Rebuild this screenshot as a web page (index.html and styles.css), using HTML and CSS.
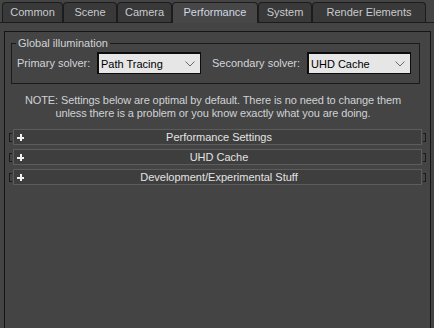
FILE: index.html
```html
<!DOCTYPE html>
<html>
<head>
<meta charset="utf-8">
<link rel="stylesheet" href="styles.css">
</head>
<body>
<div class="tabs">
  <div class="tab tab-common">Common</div>
  <div class="tab tab-scene">Scene</div>
  <div class="tab tab-camera">Camera</div>
  <div class="tab tab-performance active">Performance</div>
  <div class="tab tab-system">System</div>
  <div class="tab tab-render">Render Elements</div>
</div>
<div class="page">
  <div class="rollout">
    <fieldset class="group">
      <legend>Global illumination</legend>
      <div class="solver-row">
        <span class="label label-primary">Primary solver:</span>
        <div class="select"><span>Path Tracing</span><svg class="chev" width="10" height="6" viewBox="0 0 10 6"><polyline points="0.5,0.5 5,5 9.5,0.5" fill="none" stroke="#6a6a6a" stroke-width="1"/></svg></div>
        <span class="label label-secondary">Secondary solver:</span>
        <div class="select"><span>UHD Cache</span><svg class="chev" width="10" height="6" viewBox="0 0 10 6"><polyline points="0.5,0.5 5,5 9.5,0.5" fill="none" stroke="#6a6a6a" stroke-width="1"/></svg></div>
      </div>
    </fieldset>
    <p class="note">NOTE: Settings below are optimal by default. There is no need to change them<br>unless there is a problem or you know exactly what you are doing.</p>
    <div class="rollups">
      <div class="rollup-row">
        <span class="bracket bracket-left"></span>
        <div class="bar"><svg class="plus" width="7" height="7" viewBox="0 0 7 7"><rect x="0" y="3" width="7" height="2" fill="#f2f2f2"/><rect x="3" y="0" width="2" height="7" fill="#f2f2f2"/></svg><span class="bar-title">Performance Settings</span></div>
        <span class="bracket bracket-right"></span>
      </div>
      <div class="rollup-row">
        <span class="bracket bracket-left"></span>
        <div class="bar"><svg class="plus" width="7" height="7" viewBox="0 0 7 7"><rect x="0" y="3" width="7" height="2" fill="#f2f2f2"/><rect x="3" y="0" width="2" height="7" fill="#f2f2f2"/></svg><span class="bar-title">UHD Cache</span></div>
        <span class="bracket bracket-right"></span>
      </div>
      <div class="rollup-row">
        <span class="bracket bracket-left"></span>
        <div class="bar"><svg class="plus" width="7" height="7" viewBox="0 0 7 7"><rect x="0" y="3" width="7" height="2" fill="#f2f2f2"/><rect x="3" y="0" width="2" height="7" fill="#f2f2f2"/></svg><span class="bar-title">Development/Experimental Stuff</span></div>
        <span class="bracket bracket-right"></span>
      </div>
    </div>
  </div>
</div>
</body>
</html>
```

FILE: styles.css
```css
html, body {
  margin: 0;
  padding: 0;
  background: #444444;
  height: 100%;
  overflow: hidden;
}
body {
  font-family: "Liberation Sans", Arial, sans-serif;
  font-size: 11px;
  color: #d2d4d8;
}
.tabs {
  display: flex;
  align-items: flex-end;
  height: 20px;
  padding: 2px 0 0 2px;
  border-bottom: 1px solid #1c1c1c;
}
.tab {
  box-sizing: border-box;
  height: 20px;
  border: 1px solid #1c1c1c;
  border-bottom: none;
  border-radius: 4px 4px 0 0;
  background: #393939;
  color: #c8cacd;
  display: flex;
  align-items: center;
  justify-content: center;
  padding-bottom: 1px;
}
.tab-common { width: 61px; }
.tab-scene { width: 54px; }
.tab-camera { width: 55px; }
.tab-performance { width: 86px; }
.tab-system { width: 54px; }
.tab-render { width: 114px; }
.tab.active {
  height: 21px;
  margin-bottom: -1px;
  background: #474747;
  color: #d0d8e6;
  padding-bottom: 2px;
}
.page {
  padding: 8px 3px 0 4px;
}
.rollout {
  box-sizing: border-box;
  height: calc(100vh - 31px);
  border: 1px solid #151515;
  border-bottom: none;
  padding: 0 0 0 6px;
}
.group {
  box-sizing: border-box;
  width: 409px;
  margin: 5px 0 0 0;
  padding: 2px 5px 9px 5px;
  border: 1px solid #1a1a1a;
}
.group legend {
  padding: 0 2px;
  margin-left: -1px;
  line-height: 13px;
  color: #d2d4d8;
}
.solver-row {
  display: flex;
  align-items: center;
  height: 22px;
}
.label {
  white-space: nowrap;
}
.label-primary { width: 80px; }
.label-secondary { width: 95px; margin-left: 11px; }
.select {
  box-sizing: border-box;
  width: 104px;
  height: 22px;
  border: 2px solid #0c0c0c;
  border-right-width: 1px;
  border-bottom-width: 1px;
  background: #e6e6e6;
  color: #000;
  display: flex;
  align-items: center;
  justify-content: space-between;
  padding: 0 5px 0 2px;
}
.chev { display: block; }
.note {
  margin: 10px 15px 0 0;
  line-height: 13px;
  text-align: center;
  color: #cfd2d6;
  letter-spacing: -0.1px;
}
.rollups {
  margin: 9px 0 0 -2px;
  display: flex;
  flex-direction: column;
  gap: 4px;
}
.rollup-row {
  display: flex;
  align-items: center;
  gap: 1px;
}
.bracket {
  box-sizing: border-box;
  width: 3px;
  height: 9px;
  border: 1px solid #1a1a1a;
}
.bracket-left { border-right: none; }
.bracket-right { border-left: none; }
.bar {
  box-sizing: border-box;
  width: 409px;
  height: 16px;
  border: 1px solid #5c5c5c;
  background: #3e3e3e;
  display: grid;
  grid-template-columns: 1fr auto 1fr;
  align-items: center;
  padding-left: 3px;
}
.plus { display: block; }
.bar-title {
  color: #e4e4e4;
  line-height: 14px;
}
```
